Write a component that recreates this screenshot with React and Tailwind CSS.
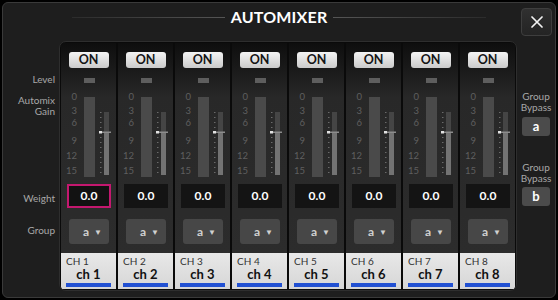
import React from "react";

const channels = [1, 2, 3, 4, 5, 6, 7, 8];

// dB scale marks, spaced the way the console draws them
const scale = [
  { v: "0", cls: "mt-0" },
  { v: "3", cls: "mt-[2px]" },
  { v: "6", cls: "mt-0" },
  { v: "9", cls: "mt-[6px]" },
  { v: "12", cls: "mt-[3px]" },
  { v: "15", cls: "mt-[3px]" },
];

function Meter() {
  const ticks = [];
  for (let y = 17; y <= 80; y += 5) ticks.push(y);
  return (
    <svg width="28" height="82" viewBox="0 0 28 82" className="ml-[7px] mt-[4px] block">
      <rect x="0" y="2" width="11" height="80" fill="#4a4a4a" />
      <rect x="20" y="17" width="5" height="20" fill="#454545" />
      <rect x="20" y="37" width="5" height="43" fill="#737373" />
      {ticks.map((y) => (
        <rect key={y} x="16" y={y} width="1.5" height="1" fill="#6a6a6a" />
      ))}
      <rect x="15" y="36" width="3" height="2.5" fill="#e2e2e2" />
      <rect x="18" y="36.5" width="9" height="1.5" fill="#8c8c8c" />
    </svg>
  );
}

function Channel({ n }) {
  const selected = n === 1;
  return (
    <div className="flex w-[55px] flex-col items-center bg-linear-to-b from-[#0e0e0e] via-[#282828] via-[22%] to-[#2d2d2d]">
      <div className="mt-[9px] flex h-[16px] w-[40px] items-center justify-center rounded-[3px] bg-linear-to-b from-[#f4f4f4] to-[#cbcbcb] text-[12.5px] font-bold text-[#141414]">
        ON
      </div>
      <div className="mt-[10px] h-[5px] w-[11px] self-start ml-[23px] bg-[#5e5e5e]" />
      <div className="mt-[8px] flex w-full items-start">
        <div className="ml-[4px] flex w-[12px] flex-col text-right text-[9.5px] leading-[12px] text-[#5f5f5f]">
          {scale.map((s) => (
            <div key={s.v} className={s.cls}>
              {s.v}
            </div>
          ))}
        </div>
        <Meter />
      </div>
      <div
        className={
          "mt-[7px] ml-[6px] flex h-[24px] w-[44px] items-center justify-center self-start border-2 text-[12px] font-bold text-white " +
          (selected ? "border-[#c4186f] bg-[#121212]" : "border-[#141414] bg-[#141414]")
        }
      >
        0.0
      </div>
      <div className="mt-[11px] ml-[8px] flex h-[25px] w-[40px] items-center justify-end gap-[5px] self-start rounded-[3px] bg-[#474747] pr-[7px] text-[12px] font-bold text-[#d0d0d0]">
        <span>a</span>
        <span className="text-[8px]">▼</span>
      </div>
      <div className="mt-[9px] flex h-[36px] w-full flex-col bg-linear-to-b from-[#e8e8e8] to-[#d6d6d6] px-[5px] pt-[3px]">
        <div className="text-[10px] leading-[11px] text-[#333]">CH {n}</div>
        <div className="text-center text-[13px] font-bold leading-[14px] text-[#111]">ch {n}</div>
        <div className="mt-[2px] h-[4px] bg-[#2150d2]" />
      </div>
    </div>
  );
}

export default function App() {
  return (
    <div className="h-[300px] w-[558px] bg-black p-[2px] font-['Lato',sans-serif]">
      <div className="flex h-full flex-col overflow-hidden rounded-[6px] border border-[#3a3a3a] bg-[#1e1e1e]">
        {/* header */}
        <div className="flex h-[38px] items-start">
          <div className="ml-[69px] mr-[35px] flex h-[28px] flex-1 items-center">
            <div className="h-px flex-1 bg-linear-to-r from-[#2c2c2c] to-[#555]" />
            <div className="px-[6px] text-[16px] font-bold tracking-[0.2px] text-white">AUTOMIXER</div>
            <div className="h-px flex-1 bg-linear-to-r from-[#555] to-[#2c2c2c]" />
          </div>
          <div className="mr-[3px] mt-[5px] flex h-[28px] w-[31px] items-center justify-center rounded-[4px] border border-[#3e3e3e] bg-linear-to-b from-[#303030] to-[#242424]">
            <svg width="12" height="12" viewBox="0 0 12 12">
              <path d="M1 1L11 11M11 1L1 11" stroke="#f2f2f2" strokeWidth="1.7" strokeLinecap="round" />
            </svg>
          </div>
        </div>

        {/* body */}
        <div className="flex">
          <div className="flex w-[56px] flex-col items-end pr-[4px] text-right text-[10px] text-[#a8a8a8]">
            <div className="mt-[32px] leading-[12px]">Level</div>
            <div className="mt-[10px] leading-[11px]">Automix</div>
            <div className="leading-[11px]">Gain</div>
            <div className="mt-[75px] leading-[12px]">Weight</div>
            <div className="mt-[20px] leading-[12px]">Group</div>
          </div>

          <div className="flex h-[250px] w-[458px] gap-[2px] overflow-hidden rounded-[7px] border border-[#2e2e2e] bg-[#0a0a0a] p-px">
            {channels.map((n) => (
              <Channel key={n} n={n} />
            ))}
          </div>

          <div className="flex w-[38px] flex-col items-center text-[10px] text-[#a8a8a8]">
            <div className="mt-[50px] text-center leading-[11px]">
              Group
              <br />
              Bypass
            </div>
            <div className="mt-[4px] flex h-[19px] w-[28px] items-center justify-center rounded-[3px] bg-[#4b4b4b] text-[13px] font-bold text-white">
              a
            </div>
            <div className="mt-[26px] text-center leading-[11px]">
              Group
              <br />
              Bypass
            </div>
            <div className="mt-[3px] flex h-[19px] w-[28px] items-center justify-center rounded-[3px] bg-[#4b4b4b] text-[13px] font-bold text-white">
              b
            </div>
          </div>
        </div>
      </div>
    </div>
  );
}
